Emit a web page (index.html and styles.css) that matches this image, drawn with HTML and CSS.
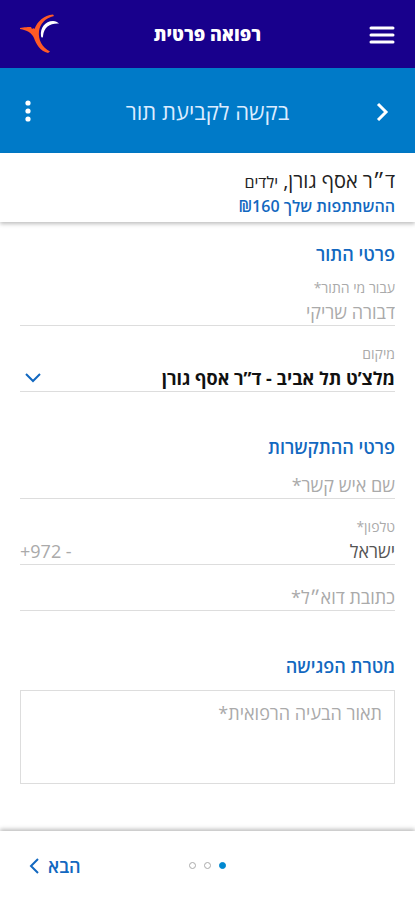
FILE: index.html
```html
<!DOCTYPE html>
<html lang="he" dir="rtl">
<head>
<meta charset="utf-8">
<meta name="viewport" content="width=device-width, initial-scale=1">
<title>רפואה פרטית</title>
<link rel="stylesheet" href="styles.css">
</head>
<body>
<header class="topbar">
  <button class="icon-button" type="button" aria-label="תפריט">
    <svg width="26" height="20" viewBox="0 0 26 20" fill="none" stroke="#fff" stroke-width="3" stroke-linecap="round"><path d="M2 4h22M2 11h22M2 18h22"/></svg>
  </button>
  <h1 class="topbar-title">רפואה פרטית</h1>
  <a class="logo" href="#" aria-label="דף הבית">
    <svg width="40" height="40" viewBox="0 0 40 40">
      <path fill="#ff5a26" d="M0 14C4 13 9 13 11 13L12 15C13 14 14 14 14.500 15C17 8 24 1 33 .5L34 2C25 4 20 10 19 17C18 26 22 33 30 37.500L28 39C20 37 16 30 14 24C12 19 7 16 0 15Z"/>
      <path fill="#fff" d="M21 22C20 14 25 7 33 7C36 7 37 8 39 9.500C30 9 24 13 23 22C23 24 21.500 24 21 22Z"/>
    </svg>
  </a>
</header>
<nav class="subbar">
  <button class="icon-button" type="button" aria-label="חזרה">
    <svg width="26" height="20" viewBox="0 0 26 20" fill="none" stroke="#fff" stroke-width="3"><path d="M9 3l8 8-8 8"/></svg>
  </button>
  <h2 class="subbar-title">בקשה לקביעת תור</h2>
  <button class="icon-button more" type="button" aria-label="אפשרויות נוספות">
    <svg width="16" height="24" viewBox="0 0 16 24" fill="#fff"><circle cx="8" cy="4" r="2.600"/><circle cx="8" cy="12" r="2.600"/><circle cx="8" cy="20" r="2.600"/></svg>
  </button>
</nav>
<section class="doctor">
  <p class="doctor-name">ד״ר אסף גורן, <span class="specialty">ילדים</span></p>
  <p class="doctor-fee">ההשתתפות שלך ₪160</p>
</section>
<form class="form">
  <fieldset class="group">
    <legend class="heading">פרטי התור</legend>
    <div class="field">
      <label class="label" for="patient">עבור מי התור*</label>
      <input class="control muted" id="patient" type="text" value="דבורה שריקי">
    </div>
    <div class="field spaced">
      <label class="label" for="place">מיקום</label>
      <div class="select-row">
        <select class="control strong" id="place"><option>מלצ’ט תל אביב - ד”ר אסף גורן</option></select>
        <svg class="chevron" width="18" height="12" viewBox="0 0 18 12" fill="none" stroke="#1268c0" stroke-width="2"><path d="M2 2l7 7 7-7"/></svg>
      </div>
    </div>
  </fieldset>
  <fieldset class="group">
    <legend class="heading">פרטי ההתקשרות</legend>
    <div class="field">
      <input class="control" type="text" aria-label="שם איש קשר" placeholder="שם איש קשר*">
    </div>
    <div class="field spaced">
      <label class="label" for="country">טלפון*</label>
      <div class="phone-row">
        <input class="control country" id="country" type="text" value="ישראל">
        <input class="control prefix muted" type="tel" dir="ltr" aria-label="מספר טלפון" value="+972 -">
      </div>
    </div>
    <div class="field spaced">
      <input class="control" type="email" dir="rtl" aria-label="כתובת דוא״ל" placeholder="כתובת דוא״ל*">
    </div>
  </fieldset>
  <fieldset class="group">
    <legend class="heading">מטרת הפגישה</legend>
    <textarea class="description" aria-label="תאור הבעיה הרפואית" placeholder="תאור הבעיה הרפואית*"></textarea>
  </fieldset>
</form>
<footer class="footer">
  <div class="dots" role="img" aria-label="שלב 1 מתוך 3">
    <span class="dot active"></span><span class="dot"></span><span class="dot"></span>
  </div>
  <button class="next" type="button">הבא
    <svg width="12" height="18" viewBox="0 0 12 18" fill="none" stroke="#1268c0" stroke-width="2"><path d="M10 2L3 9l7 7"/></svg>
  </button>
</footer>
</body>
</html>
```
FILE: styles.css
```css
* {
  box-sizing: border-box;
}

body {
  margin: 0;
  min-height: 100vh;
  display: flex;
  flex-direction: column;
  background: #fff;
  color: #222;
  font-family: "Open Sans", "Liberation Sans", sans-serif;
  font-size: 18px;
}

h1, h2, p {
  margin: 0;
}

button, input, select, textarea {
  font-family: inherit;
  color: inherit;
}

button {
  border: 0;
  padding: 0;
  background: none;
  cursor: pointer;
}

svg {
  display: block;
}

.topbar, .subbar {
  display: grid;
  grid-template-columns: 40px 1fr 40px;
  align-items: center;
  padding: 0 20px;
  color: #fff;
  text-align: center;
}

.topbar {
  height: 68px;
  background: #18008c;
}

.topbar-title {
  font-size: 18px;
  font-weight: 800;
}

.subbar {
  height: 85px;
  background: #007ac8;
}

.subbar-title {
  font-size: 22px;
  font-weight: 400;
  color: #dcecff;
}

.more {
  justify-self: end;
}

.doctor {
  height: 69px;
  padding: 16px 20px 0;
  box-shadow: 0 2px 4px rgba(0, 0, 0, .25);
}

.doctor-name {
  font-size: 20px;
  line-height: 24px;
}

.specialty {
  font-size: 16px;
}

.doctor-fee {
  font-size: 16px;
  font-weight: 600;
  line-height: 24px;
  color: #1268c0;
}

.form {
  flex: 1;
  display: flex;
  flex-direction: column;
  gap: 43px;
  padding: 20px 20px 0;
}

.group {
  min-width: 0;
  margin: 0;
  padding: 0;
  border: 0;
}

.heading {
  padding: 0;
  margin-bottom: 12px;
  font-size: 18px;
  font-weight: 600;
  line-height: 24px;
  color: #1268c0;
}

.field {
  border-bottom: 1px solid #ddd;
}

.spaced {
  margin-top: 18px;
}

.label {
  display: block;
  font-size: 14px;
  line-height: 20px;
  color: #aaa;
}

.control {
  display: block;
  width: 100%;
  height: 27px;
  padding: 0;
  border: 0;
  border-radius: 0;
  outline: 0;
  background: transparent;
  appearance: none;
  font-size: 18px;
}

.control::placeholder, .description::placeholder {
  color: #aaa;
  opacity: 1;
}

.muted {
  color: #aaa;
}

.strong {
  color: #111;
  font-weight: 700;
}

.select-row, .phone-row {
  display: flex;
  align-items: center;
}

.chevron {
  flex: none;
  margin-left: 4px;
}

.country {
  color: #555;
}

.prefix {
  width: 50%;
}

.description {
  display: block;
  width: 100%;
  height: 94px;
  padding: 10px 12px;
  border: 1px solid #ddd;
  border-radius: 0;
  outline: 0;
  resize: none;
  font-size: 18px;
}

.footer {
  height: 69px;
  display: grid;
  grid-template-columns: 1fr auto 1fr;
  align-items: center;
  padding: 0 28px;
  box-shadow: 0 -2px 4px rgba(0, 0, 0, .25);
}

.dots {
  grid-column: 2;
  display: flex;
  gap: 8px;
}

.dot {
  width: 7px;
  height: 7px;
  border: 1px solid #aaa;
  border-radius: 50%;
}

.active {
  border-color: #0088d0;
  background: #0088d0;
}

.next {
  justify-self: end;
  display: flex;
  align-items: center;
  gap: 8px;
  font-size: 18px;
  font-weight: 600;
  color: #1268c0;
}
```
